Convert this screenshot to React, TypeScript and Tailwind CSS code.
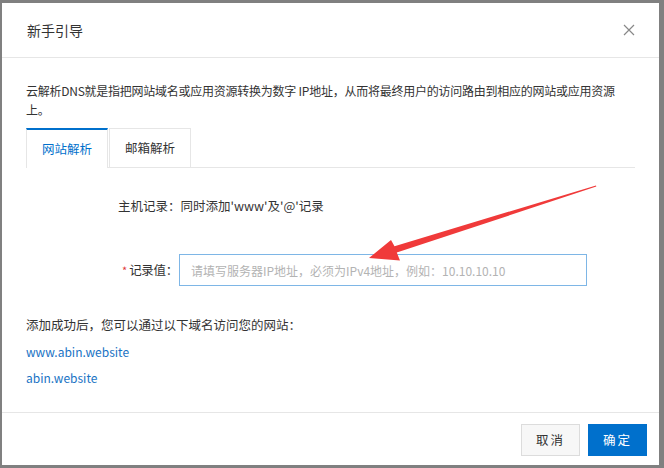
import React from 'react';

const font = { fontFamily: '"Microsoft YaHei", "Noto Sans CJK SC", "Liberation Sans", sans-serif' };

const Arrow: React.FC = () => (
  <svg className="absolute left-0 top-0 pointer-events-none" width="664" height="468" viewBox="0 0 664 468">
    <polygon
      points="369,258 391,240 394.5,246.2 596,185.4 596.3,186.6 396.8,252.6 400,260.5"
      fill="#f03a3a"
    />
  </svg>
);

const App: React.FC = () => {
  return (
    <div className="relative w-[664px] h-[468px] bg-[#808080] pl-[2px] pt-[3px] overflow-hidden" style={font}>
      <div className="w-[657px] h-[462px] bg-white flex flex-col">
        <header className="h-[55px] flex items-center justify-between pl-[25px] pr-[24px] border-b border-[#e6e6e6]">
          <h1 className="text-[14px] text-[#333]">新手引导</h1>
          <svg width="12" height="12" viewBox="0 0 12 12" className="text-[#888]">
            <path d="M1 1 L11 11 M11 1 L1 11" stroke="currentColor" strokeWidth="1.2" fill="none" />
          </svg>
        </header>

        <div className="flex-1 px-[24px] pt-[23px]">
          <p className="text-[12px] leading-[19px] text-[#333] tracking-[-0.25px] whitespace-nowrap">
            云解析DNS就是指把网站域名或应用资源转换为数字 IP地址，从而将最终用户的访问路由到相应的网站或应用资源
            <br />
            上。
          </p>

          <div className="mt-[9px] flex border-b border-[#e6e6e6] h-[40px]">
            <div className="w-[82px] border-t-2 border-t-[#0070cc] border-x border-x-[#e6e6e6] bg-white -mb-px flex items-center justify-center text-[12.5px] text-[#0070cc]">
              网站解析
            </div>
            <div className="w-[82px] ml-[1px] border border-[#e6e6e6] border-b-0 flex items-center justify-center text-[12.5px] text-[#333]">
              邮箱解析
            </div>
          </div>

          <div className="pl-[92px] pt-[28px] text-[12.5px] text-[#333]">
            <div className="h-[20px] flex items-center">主机记录：同时添加'www'及'@'记录</div>
            <div className="mt-[38px] flex items-center">
              <span className="text-[#e0393b] text-[11px] ml-[4px] mr-[2px]">*</span>
              <span className="tracking-[-0.3px]">记录值：</span>
              <input
                className="ml-[1px] w-[408px] h-[32px] border border-[#7eb6e6] px-[11px] text-[12px] outline-none placeholder:text-[#b3b3b3]"
                style={font}
                placeholder="请填写服务器IP地址，必须为IPv4地址，例如：10.10.10.10"
              />
            </div>
          </div>

          <p className="mt-[30px] text-[12.5px] text-[#333]">添加成功后，您可以通过以下域名访问您的网站：</p>
          <div className="mt-[9px] text-[12px] text-[#1a73c4] leading-[16px]">www.abin.website</div>
          <div className="mt-[10px] text-[12px] text-[#1a73c4] leading-[16px]">abin.website</div>
        </div>

        <footer className="h-[53px] border-t border-[#e6e6e6] flex items-start justify-end gap-[8px] pr-[12px] pt-[11px]">
          <button className="w-[59px] h-[32px] bg-[#f7f7f7] border border-[#dcdcdc] text-[12.5px] text-[#333] tracking-[2px]" style={font}>
            取消
          </button>
          <button className="w-[59px] h-[32px] bg-[#0070cc] text-[12.5px] text-white tracking-[2px]" style={font}>
            确定
          </button>
        </footer>
      </div>
      <Arrow />
    </div>
  );
};

export default App;
